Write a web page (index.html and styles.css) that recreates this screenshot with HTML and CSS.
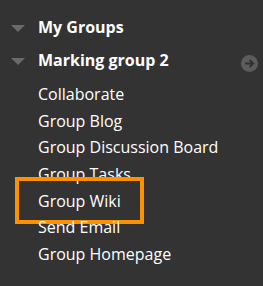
FILE: index.html
```html
<!DOCTYPE html>
<html>
<head>
<meta charset="utf-8">
<link rel="stylesheet" href="styles.css">
</head>
<body>
<div class="menu">
  <div class="header">
    <span class="tri"></span>
    <span class="title">My Groups</span>
  </div>
  <div class="header">
    <span class="tri"></span>
    <span class="title">Marking group 2</span>
    <svg class="go" width="17" height="17" viewBox="0 0 17 17">
      <circle cx="8.5" cy="8.5" r="8.5" fill="#5c5c5c"/>
      <path d="M4 8.5h8M8.6 5l3.5 3.5-3.5 3.5" fill="none" stroke="#333" stroke-width="2.2"/>
    </svg>
  </div>
  <ul class="items">
    <li>Collaborate</li>
    <li>Group Blog</li>
    <li>Group Discussion Board</li>
    <li>Group Tasks</li>
    <li class="hl">Group Wiki</li>
    <li>Send Email</li>
    <li>Group Homepage</li>
  </ul>
</div>
</body>
</html>
```
FILE: styles.css
```css
html, body {
  margin: 0;
  padding: 0;
  background: #333333;
}
body {
  width: 263px;
  height: 286px;
  overflow: hidden;
  font-family: "Open Sans", "DejaVu Sans", sans-serif;
  color: #ffffff;
}
.menu {
  padding-top: 11px;
}
.header {
  height: 33px;
  line-height: 33px;
  display: flex;
  align-items: center;
  font-weight: 700;
  font-size: 16px;
  position: relative;
}
.tri {
  width: 0;
  height: 0;
  border-left: 7px solid transparent;
  border-right: 7px solid transparent;
  border-top: 7px solid #6a6a6a;
  margin-left: 11px;
  margin-right: 13px;
  margin-top: 1px;
}
.title {
  flex: 1;
}
.go {
  position: absolute;
  left: 241px;
  top: 11px;
}
.items {
  list-style: none;
  margin: 4px 0 0 0;
  padding: 0;
}
.items li {
  height: 26.7px;
  line-height: 26.7px;
  font-size: 16px;
  padding-left: 38px;
  position: relative;
}
.items li.hl::after {
  content: "";
  position: absolute;
  left: 15px;
  top: -11px;
  width: 121px;
  height: 39px;
  border: 4px solid #ff9000;
}
```
